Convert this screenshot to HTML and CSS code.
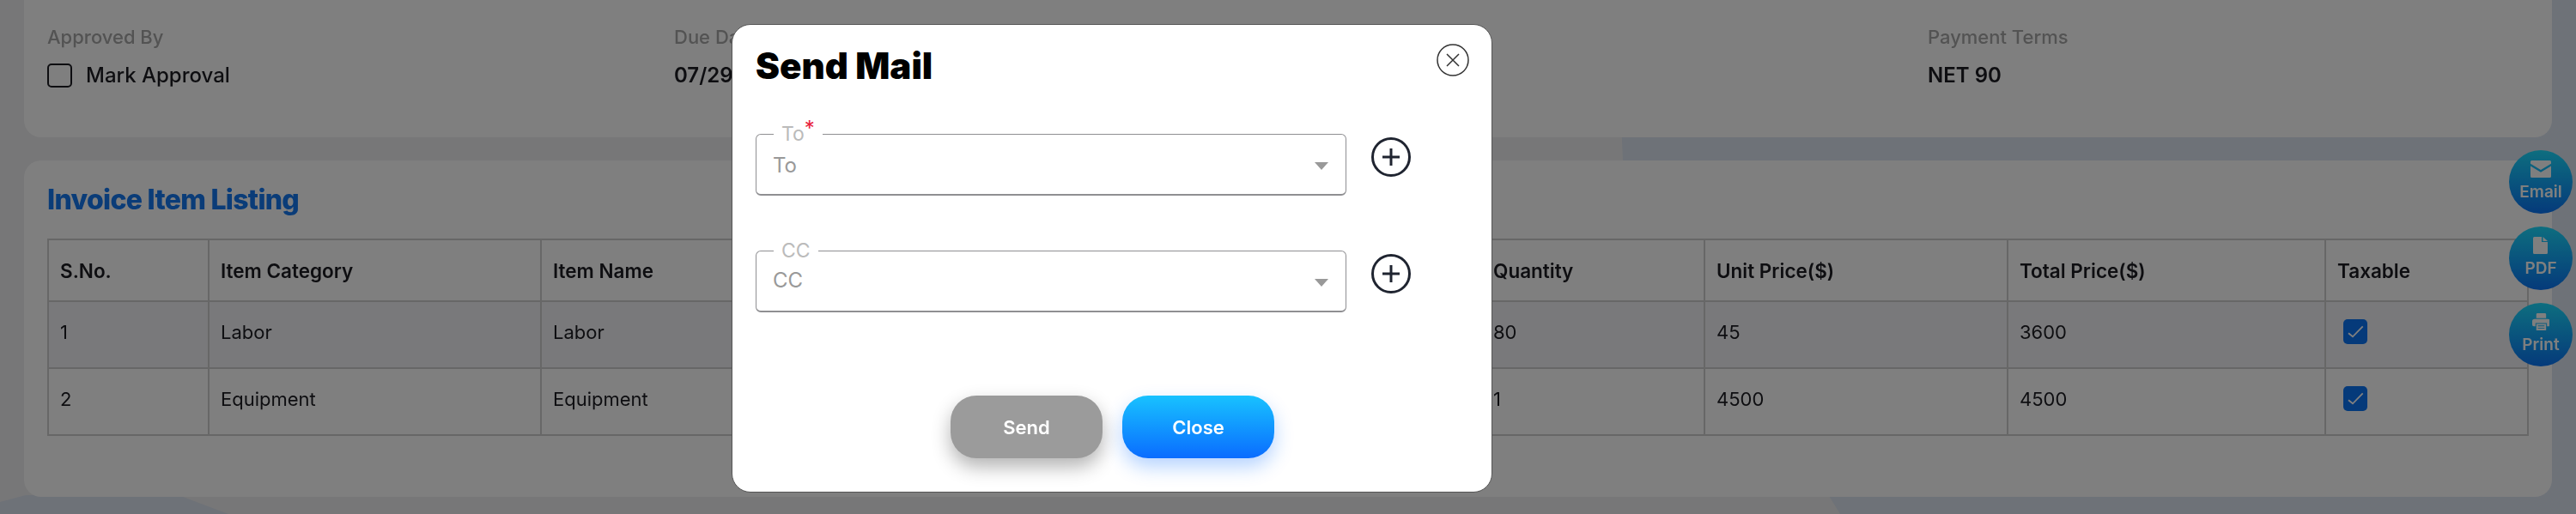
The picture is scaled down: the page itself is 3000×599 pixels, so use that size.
FILE: index.html
```html
<!DOCTYPE html>
<html lang="en">
<head>
  <meta charset="UTF-8">
  <title>Invoice Details</title>
  <link rel="stylesheet" href="styles.css">
</head>
<body>
  <div class="bg-shape"></div>

  <div class="page">
    <div class="card summary-card">
      <div class="summary-grid">
        <div>
          <div class="field-label">Approved By</div>
          <label class="approval"><span class="empty-box"></span>Mark Approval</label>
        </div>
        <div>
          <div class="field-label">Due Date</div>
          <div class="field-value">07/29/2025</div>
        </div>
        <div></div>
        <div>
          <div class="field-label">Payment Terms</div>
          <div class="field-value">NET 90</div>
        </div>
      </div>
    </div>

    <div class="card items-card">
      <h2 class="section-title">Invoice Item Listing</h2>
      <table class="items-table">
        <thead>
          <tr>
            <th class="col-no">S.No.</th>
            <th class="col-cat">Item Category</th>
            <th class="col-name">Item Name</th>
            <th class="col-qty">Quantity</th>
            <th class="col-unit">Unit Price($)</th>
            <th class="col-total">Total Price($)</th>
            <th>Taxable</th>
          </tr>
        </thead>
        <tbody>
          <tr>
            <td>1</td><td>Labor</td><td>Labor</td><td>80</td><td>45</td><td>3600</td>
            <td><span class="tick-box"><svg viewBox="0 0 28 29"><path d="M6 16.300l5 4 11.700-12"/></svg></span></td>
          </tr>
          <tr>
            <td>2</td><td>Equipment</td><td>Equipment</td><td>1</td><td>4500</td><td>4500</td>
            <td><span class="tick-box"><svg viewBox="0 0 28 29"><path d="M6 16.300l5 4 11.700-12"/></svg></span></td>
          </tr>
        </tbody>
      </table>
    </div>
  </div>

  <div class="side-actions">
    <button class="side-btn">
      <svg viewBox="0 0 26 20"><path d="M1 1.500A1.500 1.500 0 0 1 2.500 0h21A1.500 1.500 0 0 1 25 1.500v2.300L13 11 1 3.800z"/><path d="M1 6.500L13 13.700 25 6.500V18.500a1.500 1.500 0 0 1-1.500 1.500h-21A1.500 1.500 0 0 1 1 18.500z"/></svg>
      Email
    </button>
    <button class="side-btn">
      <svg viewBox="0 0 18 20"><path d="M1.500 0H10v6h7v12.500a1.500 1.500 0 0 1-1.500 1.500h-14A1.500 1.500 0 0 1 0 18.500v-17A1.500 1.500 0 0 1 1.500 0z"/><path d="M11.500 0L17 5h-5.500z"/></svg>
      PDF
    </button>
    <button class="side-btn">
      <svg viewBox="0 0 22 21"><path d="M5 1.500A1.500 1.500 0 0 1 6.500 0h9A1.500 1.500 0 0 1 17 1.500V6H5z"/><path d="M3 7h16a3 3 0 0 1 3 3v4a2 2 0 0 1-2 2h-2v-4H4v4H2a2 2 0 0 1-2-2v-4a3 3 0 0 1 3-3z"/><path fill-rule="evenodd" d="M5 13h12v8H5zM7 15v1h8v-1zM7 18v1h8v-1z"/></svg>
      Print
    </button>
  </div>

  <div class="overlay">
    <div class="modal">
      <div class="modal-head">
        <h1 class="modal-title">Send Mail</h1>
        <button class="modal-x">
          <svg viewBox="0 0 38 38"><circle cx="19" cy="19" r="18"/><path d="M12 12l14 14M26 12L12 26"/></svg>
        </button>
      </div>

      <div class="mail-row">
        <fieldset class="select-box">
          <legend>To<span class="req">*</span></legend>
          <span class="select-text">To</span>
          <span class="caret"></span>
        </fieldset>
        <button class="add-btn"><svg viewBox="0 0 46 46"><circle cx="23" cy="23" r="21.500"/><path d="M13 23h20M23 13v20"/></svg></button>
      </div>

      <div class="mail-row">
        <fieldset class="select-box">
          <legend>CC</legend>
          <span class="select-text select-text-cc">CC</span>
          <span class="caret"></span>
        </fieldset>
        <button class="add-btn"><svg viewBox="0 0 46 46"><circle cx="23" cy="23" r="21.500"/><path d="M13 23h20M23 13v20"/></svg></button>
      </div>

      <div class="modal-actions">
        <button class="pill pill-send">Send</button>
        <button class="pill pill-close">Close</button>
      </div>
    </div>
  </div>
</body>
</html>
```

FILE: styles.css
```css
* {
  box-sizing: border-box;
}
html, body {
  height: 100%;
}
body {
  margin: 0;
  overflow: hidden;
  font-family: Inter, "Liberation Sans", sans-serif;
  color: #1c1c22;
  background-color: #dce4f0;
}
.bg-shape {
  position: fixed;
  top: 0;
  left: 0;
  width: 100%;
  height: 100%;
  background-color: #eeeef0;
  clip-path: polygon(0 0, 1882px 0, 1890px 187px, 2143px 599px, 266px 599px, 213px 579px, 30px 577px, 0 585px);
}
.page {
  position: relative;
  padding: 1px 28px 0;
}
.card {
  background-color: #fff;
  border-radius: 20px;
}
.summary-card {
  height: 179px;
  margin-top: -20px;
  padding: 49px 27px 0;
}
.summary-grid {
  display: grid;
  grid-template-columns: repeat(4, 730px);
}
.field-label {
  font-size: 22px;
  line-height: 26px;
  font-weight: 500;
  color: #a6a6a6;
}
.field-value, .approval {
  margin-top: 18px;
  font-size: 24px;
  line-height: 28px;
  font-weight: 600;
}
.approval {
  display: flex;
  align-items: center;
  gap: 16px;
  font-weight: 500;
}
.empty-box {
  width: 29px;
  height: 28px;
  border: 2px solid #1c1c22;
  border-radius: 5px;
}
.items-card {
  height: 392px;
  margin-top: 27px;
  padding: 29px 27px 0;
}
.section-title {
  margin: 0 0 29px;
  font-size: 32px;
  line-height: 33px;
  font-weight: 800;
  letter-spacing: -0.7px;
  color: #1478f0;
}
.items-table {
  width: 2890px;
  table-layout: fixed;
  border-collapse: collapse;
  font-size: 22px;
}
.items-table th, .items-table td {
  padding: 0 13px;
  border: 2px solid #cfcfcf;
  text-align: left;
}
.items-table th {
  height: 72px;
  font-size: 22.500px;
  font-weight: 600;
}
.items-table td {
  height: 78px;
  padding-bottom: 6px;
}
.items-table tbody tr:nth-child(odd) {
  background-color: #f2f3f6;
}
.col-no { width: 187px; }
.col-cat { width: 387px; }
.col-name { width: 1095px; }
.col-qty { width: 260px; }
.col-unit { width: 353px; }
.col-total { width: 370px; }
.tick-box {
  display: block;
  width: 28px;
  height: 29px;
  margin: 0 0 2px 7px;
  border-radius: 5px;
  background-color: #0b74f5;
}
.tick-box svg {
  display: block;
  fill: none;
  stroke: #fff;
  stroke-width: 1.800;
}
.side-actions {
  position: fixed;
  top: 175px;
  right: 4px;
  display: flex;
  flex-direction: column;
  gap: 15px;
}
.side-btn {
  width: 74px;
  height: 74px;
  padding: 12px 0 0;
  border: none;
  border-radius: 50%;
  display: flex;
  flex-direction: column;
  align-items: center;
  gap: 7px;
  font-family: inherit;
  font-size: 19px;
  line-height: 20px;
  font-weight: 600;
  color: #fff;
  background: linear-gradient(180deg, #1cdcff, #0a74f5);
}
.side-btn svg {
  height: 20px;
  fill: #fff;
}
.overlay {
  position: fixed;
  top: 0;
  left: 0;
  right: 0;
  bottom: 0;
  padding: 28px 0 0 852px;
  background-color: rgba(0,0,0,0.5);
}
.modal {
  width: 886px;
  height: 546px;
  padding: 22px 26px 0 27px;
  background-color: #fff;
  border: 1px solid #555;
  border-radius: 22px;
}
.modal-head {
  display: flex;
  justify-content: space-between;
  align-items: flex-start;
  height: 94px;
}
.modal-title {
  margin: 1px 0 0;
  font-size: 42px;
  line-height: 50px;
  font-weight: 900;
  color: #000;
}
.modal-x {
  width: 38px;
  height: 38px;
  padding: 0;
  border: none;
  background: none;
}
.modal-x svg {
  display: block;
  fill: none;
  stroke: #333;
  stroke-width: 1.500;
}
.mail-row {
  display: flex;
  align-items: flex-start;
  gap: 29px;
  height: 136px;
}
.select-box {
  position: relative;
  width: 688px;
  height: 83px;
  margin: 0;
  padding: 11px 19px 0;
  border-style: solid;
  border-width: 1px 1px 2px;
  border-color: #8f8f92;
  border-radius: 6px;
}
.select-box legend {
  margin-left: 1px;
  padding: 0 9px;
  font-size: 23px;
  line-height: 22px;
  color: #bbb;
}
.req {
  color: #e8213a;
  vertical-align: 6px;
  font-size: 24px;
  line-height: 0;
}
.select-text {
  font-size: 24px;
  line-height: 30px;
  color: #999;
}
.select-text-cc {
  line-height: 26px;
}
.caret {
  position: absolute;
  right: 20px;
  top: 22px;
  border-left: 8px solid transparent;
  border-right: 8px solid transparent;
  border-top: 9px solid #999;
}
.add-btn {
  width: 46px;
  height: 46px;
  margin-top: 15px;
  padding: 0;
  border: none;
  background: none;
}
.add-btn svg {
  display: block;
  fill: none;
  stroke: #1f2430;
  stroke-width: 3;
}
.modal-actions {
  display: flex;
  gap: 23px;
  margin: 44px 0 0 227px;
}
.pill {
  width: 177px;
  height: 73px;
  border: none;
  border-radius: 30px;
  font-family: inherit;
  font-size: 22px;
  font-weight: 600;
  color: #fff;
}
.pill-send {
  background-color: #9b9b9b;
  box-shadow: 0 10px 22px rgba(0,0,0,0.3);
}
.pill-close {
  background: linear-gradient(180deg, #18c2ff, #0a6cff);
  box-shadow: 0 10px 22px rgba(10,108,255,0.3);
}
```
